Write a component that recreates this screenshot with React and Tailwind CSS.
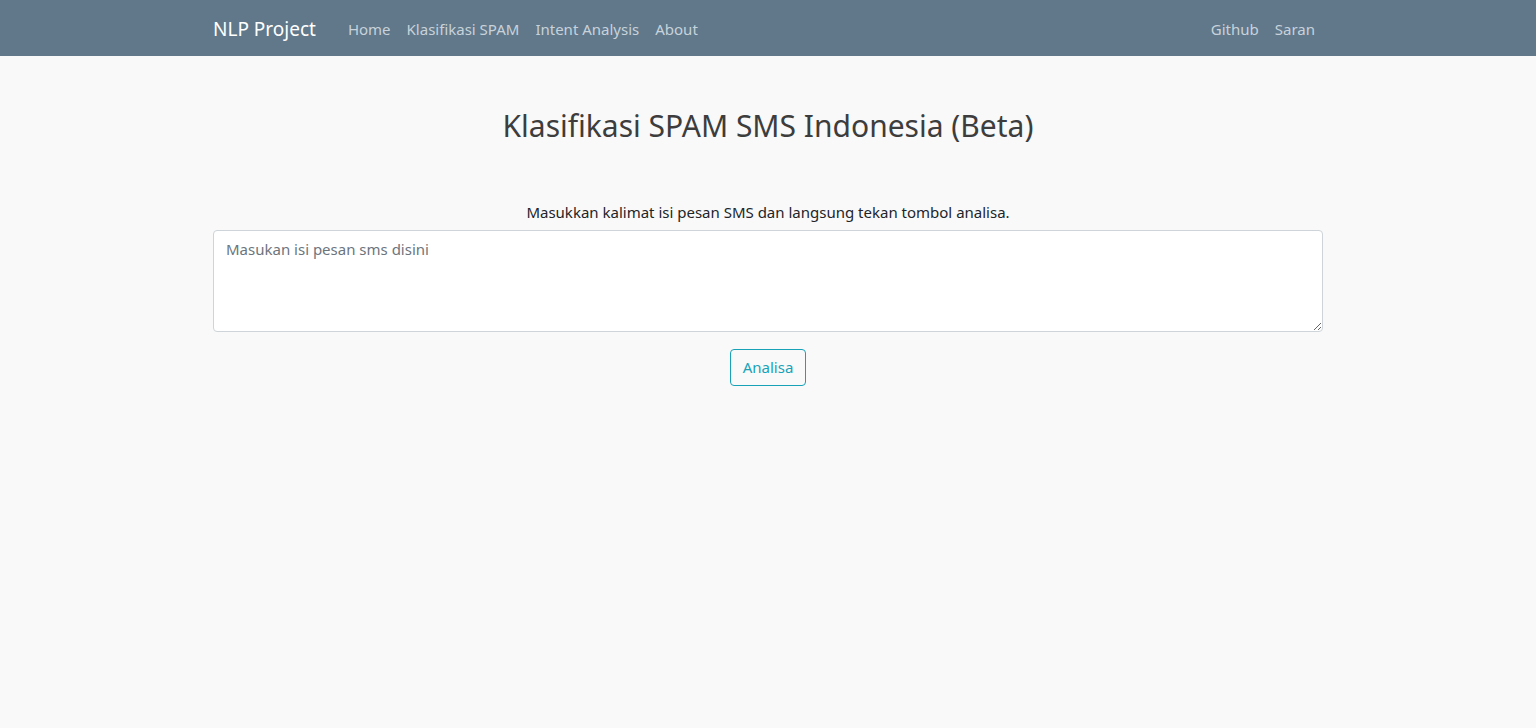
export default function App() {
  const font = { fontFamily: '"Noto Sans", "Open Sans", sans-serif' };
  return (
    <div className="min-h-screen bg-[#f9f9f9] text-[#212529]" style={font}>
      <nav className="h-14 bg-[#60788a]">
        <div className="mx-auto flex h-full w-[1140px] items-center px-[15px] pt-[2px]">
          <span className="mr-6 text-[19px] text-white">NLP Project</span>
          <div className="flex text-[15px] text-[#c8d2da]">
            <span className="px-2">Home</span>
            <span className="px-2">Klasifikasi SPAM</span>
            <span className="px-2">Intent Analysis</span>
            <span className="px-2">About</span>
          </div>
          <div className="ml-auto flex text-[15px] text-[#c8d2da]">
            <span className="px-2">Github</span>
            <span className="px-2">Saran</span>
          </div>
        </div>
      </nav>
      <div className="mx-auto w-[1140px] px-[15px]">
        <h1 className="mt-[52px] text-center text-[30px] leading-[36px] text-[#3d3d3d]">
          Klasifikasi SPAM SMS Indonesia (Beta)
        </h1>
        <p className="mt-[56px] text-center text-[15px] leading-6">
          Masukkan kalimat isi pesan SMS dan langsung tekan tombol analisa.
        </p>
        <textarea
          className="mt-[6px] block h-[102px] w-full resize-y rounded border border-[#ced4da] bg-white px-3 py-[6px] text-[15px] leading-6 text-[#495057] placeholder:text-[#6c757d] outline-none"
          placeholder="Masukan isi pesan sms disini"
        />
        <div className="mt-[17px] flex justify-center">
          <button className="h-[37px] rounded border border-[#17a2b8] px-3 text-[15px] text-[#17a2b8]">
            Analisa
          </button>
        </div>
      </div>
    </div>
  );
}
